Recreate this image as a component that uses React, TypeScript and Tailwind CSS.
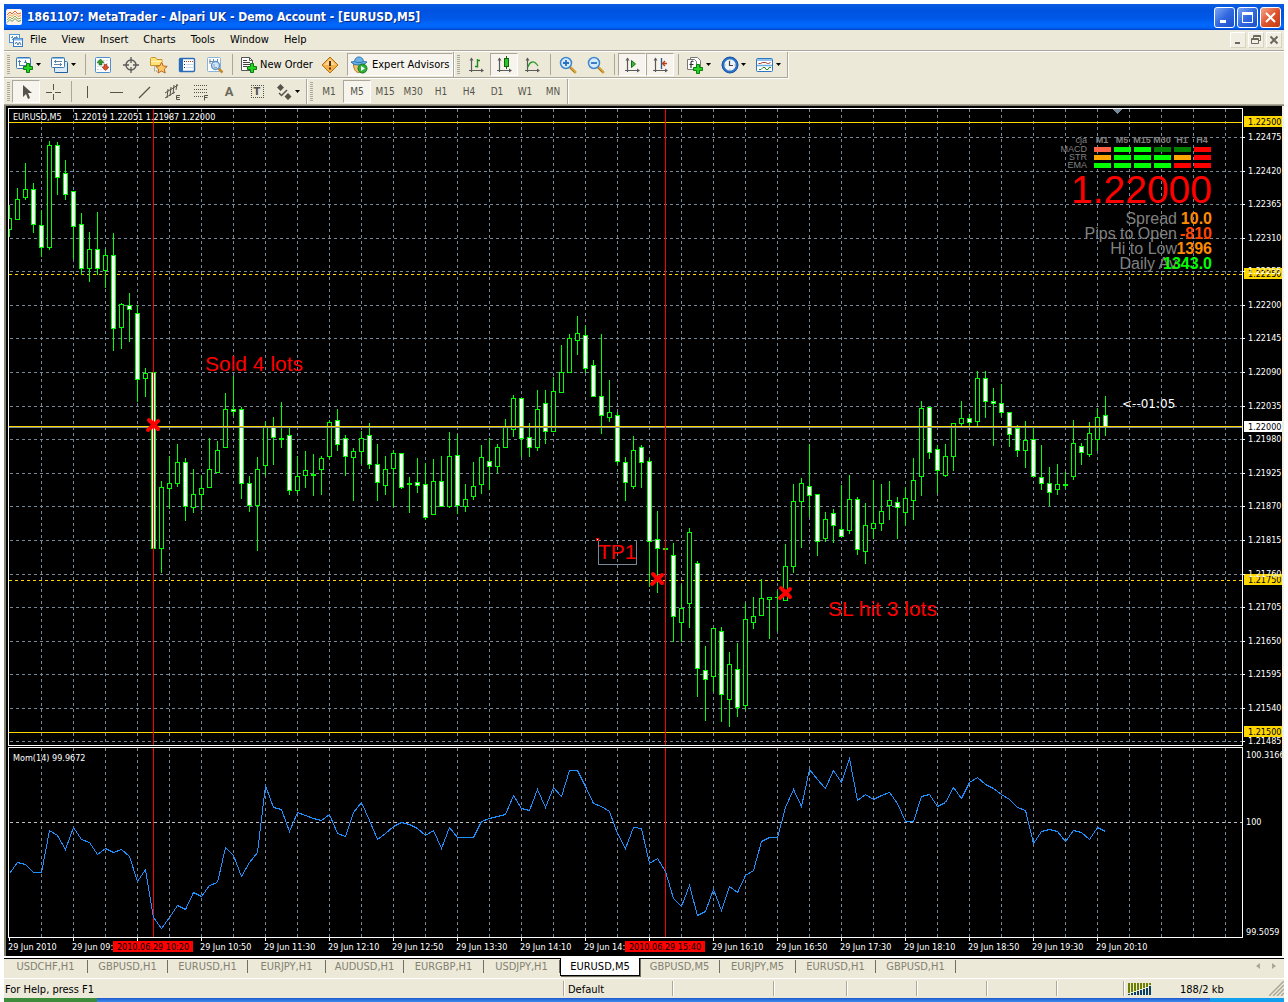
import type { ReactNode } from "react"

type Kind = "up" | "down"
type Candle = [high: number, top: number, bottom: number, low: number, kind: Kind]

const U: Kind = "up"
const D: Kind = "down"

// one bar every 8px, values are rows of the price pane
const candles: Candle[] = [
  [205, 218, 230, 237, U], [188, 199, 220, 220, U], [163, 189, 198, 200, U], [183, 189, 225, 233, D],
  [210, 225, 248, 257, D], [141, 145, 248, 250, U], [142, 145, 178, 195, D], [160, 173, 195, 200, D],
  [191, 191, 227, 259, D], [213, 224, 269, 275, D], [232, 249, 269, 282, U], [212, 249, 269, 275, D],
  [249, 255, 271, 288, U], [233, 255, 329, 351, D], [303, 304, 328, 349, U], [293, 305, 310, 342, D],
  [305, 313, 380, 402, D], [368, 373, 379, 397, U], [372, 372, 549, 549, D], [481, 487, 549, 573, U],
  [456, 483, 489, 509, U], [444, 462, 484, 487, U], [458, 462, 507, 521, D], [469, 494, 508, 513, U],
  [475, 488, 495, 510, U], [438, 469, 488, 488, U], [441, 450, 473, 473, U], [393, 409, 448, 448, U],
  [376, 409, 412, 416, D], [407, 409, 484, 499, D], [476, 483, 506, 512, D], [457, 469, 506, 551, U],
  [422, 427, 466, 476, U], [417, 427, 438, 465, D], [402, 438, 440, 448, U], [428, 435, 491, 495, D],
  [456, 476, 491, 494, U], [451, 470, 476, 488, U], [454, 474, 476, 496, U], [456, 458, 470, 495, U],
  [420, 422, 457, 459, U], [409, 420, 445, 451, D], [435, 438, 457, 476, D], [448, 451, 458, 501, U],
  [431, 438, 452, 464, U], [423, 435, 465, 469, D], [444, 464, 483, 501, D], [456, 469, 486, 495, U],
  [450, 453, 469, 507, U], [453, 453, 488, 489, D], [477, 483, 485, 513, U], [458, 482, 486, 493, D],
  [463, 484, 518, 520, D], [459, 481, 515, 515, U], [456, 481, 507, 507, D], [432, 456, 507, 508, U],
  [434, 455, 506, 514, D], [484, 499, 507, 512, U], [462, 486, 497, 500, U], [445, 457, 485, 494, U],
  [438, 461, 467, 490, D], [444, 447, 467, 473, U], [419, 426, 448, 448, U], [395, 398, 430, 437, U],
  [398, 398, 439, 457, D], [423, 437, 448, 457, D], [390, 409, 448, 451, U], [390, 403, 432, 444, D],
  [377, 391, 432, 432, U], [345, 372, 393, 393, U], [334, 338, 373, 373, U], [316, 333, 341, 355, U],
  [326, 335, 369, 373, D], [360, 365, 397, 397, D], [334, 396, 416, 434, D], [380, 412, 418, 422, U],
  [412, 415, 462, 465, D], [457, 462, 483, 501, D], [436, 450, 487, 489, U], [445, 447, 463, 488, D],
  [458, 461, 542, 587, D], [511, 539, 549, 593, D], [548, 548, 550, 550, U], [543, 555, 617, 642, D],
  [585, 608, 623, 642, U], [528, 532, 604, 628, U], [561, 563, 669, 697, D], [646, 670, 680, 721, D],
  [628, 628, 677, 692, U], [627, 631, 695, 722, D], [652, 664, 700, 727, U], [643, 669, 708, 717, D],
  [603, 619, 706, 710, U], [597, 616, 623, 629, U], [579, 598, 616, 616, U], [597, 597, 600, 639, U],
  [591, 597, 598, 631, U], [544, 566, 601, 601, U], [484, 501, 567, 573, U], [478, 483, 502, 548, U],
  [444, 486, 496, 517, D], [494, 494, 542, 556, D], [512, 519, 539, 542, U], [509, 513, 526, 543, D],
  [485, 529, 537, 537, D], [475, 499, 531, 534, U], [497, 499, 550, 555, D], [503, 525, 552, 564, U],
  [480, 523, 529, 539, U], [484, 511, 524, 531, U], [481, 500, 506, 520, U], [497, 502, 508, 539, D],
  [487, 498, 513, 526, U], [458, 480, 501, 520, U], [401, 408, 477, 496, U], [407, 407, 453, 459, D],
  [445, 449, 471, 494, D], [444, 456, 476, 477, U], [423, 423, 457, 471, U], [401, 418, 424, 427, U],
  [414, 418, 423, 427, D], [371, 378, 422, 427, U], [371, 378, 402, 418, D], [388, 401, 404, 446, D],
  [384, 403, 413, 417, D], [412, 412, 435, 447, D], [425, 428, 451, 457, D], [421, 440, 451, 468, U],
  [428, 439, 477, 477, D], [445, 477, 484, 490, D], [467, 483, 493, 506, D], [464, 484, 490, 495, U],
  [472, 484, 486, 489, U], [420, 443, 477, 480, U], [443, 446, 453, 465, D], [422, 433, 455, 457, U],
  [408, 417, 440, 451, U], [396, 415, 428, 436, D],
]

const momentum = [
  873, 862, 864, 872, 872, 830, 835, 849, 827, 839, 842, 854, 848, 852, 849, 856, 881, 869, 917, 928,
  917, 905, 909, 892, 896, 885, 882, 847, 855, 876, 862, 852, 785, 807, 809, 831, 812, 815, 818, 820,
  814, 833, 836, 812, 802, 820, 839, 833, 826, 822, 824, 828, 835, 830, 848, 827, 837, 837, 837, 821,
  818, 816, 814, 795, 808, 810, 789, 807, 787, 796, 770, 770, 786, 803, 806, 811, 833, 848, 827, 828,
  863, 858, 871, 898, 906, 885, 915, 911, 889, 910, 886, 892, 875, 870, 841, 837, 837, 807, 789, 806,
  769, 779, 788, 770, 782, 758, 800, 794, 799, 795, 792, 803, 821, 821, 796, 794, 806, 802, 787, 798,
  782, 777, 784, 788, 794, 799, 807, 810, 843, 831, 829, 831, 841, 830, 832, 839, 827, 831,
]

const prices: [string, number][] = [
  ["1.22475", 137], ["1.22420", 171], ["1.22365", 204], ["1.22310", 238], ["1.22255", 271],
  ["1.22200", 305], ["1.22145", 338], ["1.22090", 372], ["1.22035", 406], ["1.21980", 439],
  ["1.21925", 473], ["1.21870", 506], ["1.21815", 540], ["1.21760", 574], ["1.21705", 607],
  ["1.21650", 641], ["1.21595", 674], ["1.21540", 708], ["1.21485", 741],
]

const badges: [string, number, string][] = [
  ["1.22500", 122, "#ffd700"], ["1.22250", 274, "#ffd700"], ["1.22000", 427, "#ffffff"],
  ["1.21750", 580, "#ffd700"], ["1.21500", 732, "#ffd700"],
]

const dates: [string, number][] = [
  ["29 Jun 2010", 0], ["29 Jun 09:30", 64], ["", 128], ["29 Jun 10:50", 192], ["29 Jun 11:30", 256],
  ["29 Jun 12:10", 320], ["29 Jun 12:50", 384], ["29 Jun 13:30", 448], ["29 Jun 14:10", 512],
  ["29 Jun 14:50", 576], ["", 640], ["29 Jun 16:10", 704], ["29 Jun 16:50", 768], ["29 Jun 17:30", 832],
  ["29 Jun 18:10", 896], ["29 Jun 18:50", 960], ["29 Jun 19:30", 1024], ["29 Jun 20:10", 1088],
]

const columns = Array.from({ length: 38 }, (_, i) => 32 + i * 32)
const trades = [144, 656]
const marks = [[144, 425], [648, 579], [776, 593]]

const signals: [string, number, string[]][] = [
  ["MACD", 149, ["#ff6347", "#00ff00", "#00ff00", "#008000", "#008000", "#ff0000"]],
  ["STR", 157, ["#ffa500", "#00ff00", "#00ff00", "#00ff00", "#ffa500", "#ff0000"]],
  ["EMA", 165, ["#00ff00", "#00ff00", "#00ff00", "#00ff00", "#ff0000", "#ff0000"]],
]

const stats: [string, string, number, string][] = [
  ["Spread", "10.0", 224, "#ff8c00"],
  ["Pips to Open", "-810", 239, "#ff4500"],
  ["Hi to Low", "1396", 254, "#ff8c00"],
  ["Daily Av", "1343.0", 269, "#00ff00"],
]

const periods = ["M1", "M5", "M15", "M30", "H1", "H4", "D1", "W1", "MN"]

/* ---------- icons ---------- */

function Icon({ children, label, size = 18 }: { children: ReactNode; label?: string; size?: number }) {
  return (
    <svg width={size} height={size} viewBox={`0 0 ${size} ${size}`} className="shrink-0" aria-label={label} fill="none">
      {children}
    </svg>
  )
}

const Plus = ({ x, y }: { x: number; y: number }) => (
  <path
    transform={`translate(${x} ${y})`}
    d="M3.5.5h3v3h3v3h-3v3h-3v-3h-3v-3h3z"
    fill="#25d425"
    stroke="#0a7d0a"
  />
)

const NewChartIcon = () => (
  <Icon>
    <rect x="0.5" y="1.5" width="14" height="11" rx="1" fill="#fff" stroke="#3b78b4" />
    <path d="M1 2.500h13" stroke="#8fc0ea" />
    <path d="M3.500 4v6M2 5.500h3M3 9.500h9M9.500 4v3M8 6.500h3" stroke="#4f7ea8" />
    <Plus x={7} y={7} />
  </Icon>
)

const ProfilesIcon = () => (
  <Icon>
    <rect x="3.500" y="5.500" width="13" height="11" rx="1" fill="#dcebf8" stroke="#3b78b4" />
    <rect x="0.5" y="1.500" width="13" height="10" rx="1" fill="#fff" stroke="#3b78b4" />
    <path d="M1 2.500h12" stroke="#8fc0ea" />
    <path d="M3 5.500h8M3 8.500h8M4.500 4v3M9.500 7v3" stroke="#5f86a8" />
    <path d="M16.500 7v9.500h-12" stroke="#235f9c" />
  </Icon>
)

const MarketIcon = () => (
  <Icon>
    <rect x="1.5" y="1.5" width="15" height="15" rx="1" fill="#fff" stroke="#4c8fd0" />
    <path d="M3 4.500h12M3 7.500h12M3 10.500h12M3 13.500h12" stroke="#d3dde6" strokeDasharray="2 1" />
    <path d="M6.500 3l3.500 3.500H8V9H5V6.500H3z" fill="#2d9a2d" stroke="#176317" strokeWidth="0.6" />
    <path d="M11.500 14.500L8 11h2V8.500h3V11h2z" fill="#e0502a" stroke="#8f260d" strokeWidth="0.6" />
  </Icon>
)

const TargetIcon = () => (
  <Icon>
    <circle cx="9" cy="9" r="5" stroke="#5a5a5a" strokeWidth="1.4" />
    <path d="M9 1v6M9 11v6M1 9h6M11 9h6" stroke="#5a5a5a" strokeWidth="1.3" />
  </Icon>
)

const starPath = "M11.500 6.500l1.800 3.500 3.900.4-2.900 2.700.9 3.900-3.700-1.900-3.500 1.900.6-3.900-2.800-2.700 3.900-.5z"

const NavigatorIcon = () => (
  <Icon>
    <path d="M.5 9.500v-7l1-1h4l1.500 2h5v6z" fill="#ffe27a" stroke="#c8962c" />
    <path d="M1 5.500h11" stroke="#fff3b8" />
    <path d="M4.500 10.500v4.500h3" stroke="#777" strokeDasharray="1 1" />
    <path d={starPath} fill="#ffc766" stroke="#b9661c" />
  </Icon>
)

const TerminalIcon = () => (
  <Icon>
    <rect x="1.500" y="2.500" width="15" height="13" rx="1" fill="#fff" stroke="#2a6cb8" strokeWidth="1.400" />
    <path d="M3.500 3v12" stroke="#2a6cb8" strokeWidth="3" />
    <path d="M8 5.500h7" stroke="#c2452a" strokeDasharray="1 1" />
    <path d="M8 8.500h7M8 11.500h7" stroke="#c9d8e6" />
    <path d="M6 5h1v1h-1zM6 8h1v1h-1zM6 11h1v1h-1z" fill="#223" />
  </Icon>
)

const TesterIcon = () => (
  <Icon>
    <rect x="1.500" y="1.500" width="13" height="14" rx="1" fill="#fff" stroke="#8ab4d8" />
    <path d="M4 3v5M3 5.500h4M7.500 3v4M11.500 3v3" stroke="#6d8aa4" />
    <path d="M12.500 12.500l4 4" stroke="#c58a2c" strokeWidth="2.500" />
    <circle cx="9.500" cy="9.500" r="4" fill="#cfe6fa" stroke="#5f93c4" strokeWidth="1.400" />
    <path d="M8 8v3.500h3" stroke="#86a6c0" />
  </Icon>
)

const OrderIcon = () => (
  <Icon>
    <path d="M1.500 1.500h8l3 3v10h-11z" fill="#fff" stroke="#555" />
    <path d="M9.500 1.500v3h3" stroke="#555" />
    <path d="M3 4.500h4M3 6.500h7M3 8.500h7M3 10.500h4" stroke="#444" />
    <Plus x={7} y={7} />
  </Icon>
)

const WarningIcon = () => (
  <Icon>
    <path d="M9 1l8 8-8 8-8-8z" fill="#f6b24a" stroke="#b46e16" strokeLinejoin="round" />
    <path d="M9 3l6 6H3z" fill="#fbd696" />
    <path d="M8 5h2v5H8zM8 11.500h2v2H8z" fill="#5b3208" />
  </Icon>
)

const ExpertIcon = () => (
  <Icon>
    <path d="M3.500 8c0 6 3 8.500 5 8.500S14 14 14 8z" fill="#f2c36a" stroke="#a87420" />
    <path d="M1 6C3 8.500 6 9 9 9s6-.5 8-3l-3.500-.5C13 2 11 1 9 1S5 2 4.500 5.500z" fill="#6db2e6" stroke="#2c74ae" />
    <path d="M4.500 5.500c3 1.500 6 1.500 9 0" stroke="#2c74ae" />
    <circle cx="12.500" cy="12.500" r="4.500" fill="#2eae3a" stroke="#137a20" />
    <path d="M11 10l4 2.500-4 2.500z" fill="#fff" />
  </Icon>
)

const Axes = () => (
  <>
    <path d="M4.500 2v14M2 14.500h14" stroke="#5a5a5a" strokeWidth="1.200" />
    <path d="M2.500 4.500l2-3 2 3zM14 12.500l3 2-3 2z" fill="#5a5a5a" />
  </>
)

const BarsIcon = () => (
  <Icon>
    <Axes />
    <path d="M10.500 3v8.500M8 10.500h2.500M10.500 4.500H13" stroke="#1e8a1e" strokeWidth="1.400" />
  </Icon>
)

const CandlesIcon = () => (
  <Icon>
    <Axes />
    <path d="M11.500 0v13" stroke="#116611" />
    <rect x="9.500" y="2.500" width="4" height="8" fill="#2fc22f" stroke="#116611" />
  </Icon>
)

const LineIcon = () => (
  <Icon>
    <Axes />
    <path d="M5 11c2-6 6-7 10-1" stroke="#2d9a2d" strokeWidth="1.300" />
  </Icon>
)

const ZoomIcon = ({ plus }: { plus?: boolean }) => (
  <Icon>
    <path d="M11 11l5 5" stroke="#d8a43c" strokeWidth="3" strokeLinecap="round" />
    <path d="M11 12l4.500 4.500" stroke="#8f6a1c" strokeWidth="0.8" />
    <circle cx="7" cy="7" r="5.500" fill="#d6ebff" stroke="#3f86cc" strokeWidth="1.500" />
    <path d={plus ? "M4 7h6M7 4v6" : "M4 7h6"} stroke="#2a72bd" strokeWidth="1.800" />
  </Icon>
)

const ScrollIcon = () => (
  <Icon>
    <Axes />
    <path d="M8.500 4.500l4 3.500-4 3.500z" fill="#38b838" stroke="#146c14" />
  </Icon>
)

const ShiftIcon = () => (
  <Icon>
    <Axes />
    <path d="M10.500 2v11" stroke="#2e5f8f" strokeWidth="1.400" />
    <path d="M16 7.500h-4M14 5l-2.500 2.500L14 10" stroke="#b8401a" strokeWidth="1.400" />
  </Icon>
)

const IndicatorIcon = () => (
  <Icon>
    <path d="M4.500 1.500h7l3 3v9h-10z" fill="#fff" stroke="#777" />
    <path d="M1.500 3.500h7l2 2v8h-9z" fill="#fff" stroke="#777" />
    <path d="M7.500 5.500c-2-1-2.500 0-2.500 2v4.500M3.500 8.500h4" stroke="#333" strokeWidth="1.200" />
    <Plus x={7} y={8} />
  </Icon>
)

const ClockIcon = () => (
  <Icon>
    <circle cx="9" cy="9" r="7" fill="#eef4fa" stroke="#2a72c8" strokeWidth="2.600" />
    <circle cx="9" cy="9" r="8" stroke="#174f96" strokeWidth="0.8" />
    <path d="M8.500 5v4.500h3.500" stroke="#444" strokeWidth="1.200" />
    <path d="M9 3.500v1M9 13.500v1M3.500 9h1M13.500 9h1" stroke="#888" />
  </Icon>
)

const TemplateIcon = () => (
  <Icon>
    <rect x="0.5" y="2.500" width="16" height="13" rx="1" fill="#fff" stroke="#2f77bd" />
    <path d="M1 4h15M1 9.500h15" stroke="#6fade6" strokeWidth="1.500" />
    <path d="M2.500 7.500h2l2-1h3l2 1h1l2-1" stroke="#a33a20" />
    <path d="M3 13.500h2l2-2h2l1 2h2l1-2h2" stroke="#2b8a2b" />
  </Icon>
)

const gray = "#55534a"

const drawingTools: [string, ReactNode][] = [
  ["Vertical line", <path d="M7.500 3v12" stroke={gray} />],
  ["Horizontal line", <path d="M2 9.500h13" stroke={gray} />],
  ["Trendline", <path d="M3 15L14 4" stroke={gray} strokeWidth="1.300" />],
  [
    "Equidistant channel",
    <>
      <path d="M1 10L14 2M1 15l10-6M4 6l-1 9M7 4L6 13M10 2L9 11M13 1l-1 6" stroke={gray} />
      <path d="M16 12.500h-3.500v4H16M12.500 14.500h3" stroke={gray} />
    </>,
  ],
  [
    "Fibonacci retracement",
    <>
      <path d="M2 2.500h14M2 6.500h14M2 9.500h14M2 13.500h9" stroke={gray} strokeDasharray="1 1" />
      <path d="M16 12.500h-3.500v5M12.500 14.500h3" stroke={gray} />
    </>,
  ],
]

const Caret = () => (
  <svg width="5" height="3" viewBox="0 0 5 3" className="shrink-0">
    <path d="M0 0h5L2.500 3z" fill="#000" />
  </svg>
)

/* ---------- toolbar parts ---------- */

function Tool({ label, pressed, children }: { label: string; pressed?: boolean; children: ReactNode }) {
  return (
    <button
      type="button"
      aria-label={label}
      className={
        pressed
          ? "flex h-[23px] w-7 items-center justify-center border border-[#aca899] border-r-white border-b-white bg-[#f6f4ec]"
          : "flex h-[23px] w-7 items-center justify-center"
      }
    >
      {children}
    </button>
  )
}

function DropTool({ label, children }: { label: string; children: ReactNode }) {
  return (
    <button type="button" aria-label={label} className="flex h-[23px] w-[35px] items-center gap-0.5 pl-1">
      {children}
      <Caret />
    </button>
  )
}

const Separator = ({ wide }: { wide?: boolean }) => (
  <span className={wide ? "flex w-2 justify-center" : "flex w-[7px] justify-center"}>
    <span className="h-[21px] w-px bg-[#aca899]" />
  </span>
)

const Grip = () => (
  <span className="flex w-2 justify-center">
    <span className="h-[19px] w-[3px] bg-[repeating-linear-gradient(to_bottom,#aca899_0_1px,#ece9d8_1px_2px)]" />
  </span>
)

function Toolbar({ children }: { children: ReactNode }) {
  return (
    <div className="flex h-[26px] items-center border-r border-b border-[#aca899] shadow-[1px_1px_0_#fff]">
      {children}
    </div>
  )
}

/* ---------- chart ---------- */

function Grid({ height }: { height: string }) {
  return (
    <g stroke="#778899" strokeDasharray="3 3" transform="translate(0.5 0)">
      {columns.map((x) => (
        <line key={x} x1={x} x2={x} y1="0" y2={height} />
      ))}
    </g>
  )
}

function PricePane() {
  return (
    <svg width="100%" height="636" className="block" shapeRendering="crispEdges" role="img" aria-label="EURUSD,M5">
      <Grid height="100%" />
      <g transform="translate(0 -109)">
        <g transform="translate(0 0.5)">
          {prices.map(([p, y]) => (
            <line key={p} x1="1" x2="100%" y1={y} y2={y} stroke="#778899" strokeDasharray="3 3" />
          ))}
          <line x1="0" x2="100%" y1="122" y2="122" stroke="#ffd700" />
          <line x1="0" x2="100%" y1="732" y2="732" stroke="#ffd700" />
          <line x1="0" x2="100%" y1="274" y2="274" stroke="#ffd700" strokeDasharray="3 3" />
          <line x1="0" x2="100%" y1="580" y2="580" stroke="#ffd700" strokeDasharray="3 3" />
        </g>
        {candles.map(([high, top, bottom, low, kind], i) => (
          <g key={i}>
            <rect x={i * 8} y={high} width="1" height={low - high} fill="#00ff00" />
            <rect x={i * 8 - 2} y={top} width="5" height={bottom - top} fill="#00ff00" />
            {bottom - top > 2 && (
              <rect
                x={i * 8 - 1}
                y={top + 1}
                width="3"
                height={bottom - top - 2}
                fill={kind === "up" ? "#000000" : "#ffffff"}
              />
            )}
          </g>
        ))}
        <rect x="0" y="427" width="100%" height="1" fill="#778899" />
        <rect x="0" y="426" width="100%" height="1" fill="#ffd700" />
        {trades.map((x) => (
          <rect key={x} x={x} y="109" width="1" height="636" fill="#ff0000" />
        ))}
        <path d="M1103 109h11l-5.500 5z" fill="#778899" />

        <g shapeRendering="auto" stroke="#ff0000" strokeWidth="4" strokeLinecap="round">
          {marks.map(([x, y]) => (
            <path key={x} d={`M${x - 4} ${y - 5}l9 9M${x + 5} ${y - 4}l-10 9`} />
          ))}
        </g>

        <g fill="#ff0000" fontSize="21">
          <text x="196" y="371">Sold 4 lots</text>
          <text x="589" y="559">TP1</text>
          <text x="819" y="616">SL hit 3 lots</text>
        </g>
        <path d="M589.500 541v23.500h38v-24" fill="none" stroke="#778899" />
        <rect x="587" y="538" width="3" height="3" fill="#ff0000" />
        <rect x="588" y="539" width="1" height="1" fill="#ffffff" />
        <text x="1113" y="408" fontSize="12" fill="#ffffff" fontFamily="DejaVu Sans, sans-serif">
          {"<--01:05"}
        </text>

        <g fontSize="9" fill="#808080">
          <text x="1078" y="143" textAnchor="end">cja</text>
          {["M1", "M5", "M15", "M30", "H1", "H4"].map((p, i) => (
            <text key={p} x={1093 + i * 20} y="143" textAnchor="middle" fontWeight="bold">{p}</text>
          ))}
          {signals.map(([name, y, colors]) => (
            <g key={name}>
              <text x="1078" y={y + 3} textAnchor="end">{name}</text>
              {colors.map((c, i) => (
                <rect key={i} x={1085 + i * 20} y={y - 2} width="17" height="5" fill={c} />
              ))}
            </g>
          ))}
        </g>
        <text x="1203" y="203" fontSize="39" fill="#ff0000" textAnchor="end">1.22000</text>
        {stats.map(([name, value, y, color]) => (
          <g key={name} fontSize="16">
            <text x="1168" y={y} fill="#808080" textAnchor="end">{name}</text>
            <text x="1203" y={y} fill={color} textAnchor="end" fontWeight="bold">{value}</text>
          </g>
        ))}
      </g>
    </svg>
  )
}

function MomentumPane() {
  return (
    <svg width="100%" height="100%" className="absolute inset-0" role="img" aria-label="Momentum">
      <g shapeRendering="crispEdges">
        <Grid height="100%" />
        <line x1="1" x2="100%" y1="74" y2="74" transform="translate(0 0.5)" stroke="#c0c0c0" strokeDasharray="3 3" />
        {trades.map((x) => (
          <rect key={x} x={x} y="0" width="1" height="100%" fill="#ff0000" />
        ))}
        <polyline
          points={momentum.map((y, i) => `${i * 8},${y - 748}`).join(" ")}
          transform="translate(0.5 0.5)"
          fill="none"
          stroke="#1e90ff"
        />
      </g>
    </svg>
  )
}

function Chart() {
  return (
    <main className="flex flex-1 flex-col border-t border-l-2 border-[#85836f] bg-black pt-[2px] pr-0.5 pl-0.5 text-white shadow-[0_-1px_0_#aca899,inset_-2px_0_0_#f1efe2]">
      <div className="flex">
        <div className="relative min-w-0 flex-1 overflow-hidden border border-white font-['Liberation_Sans',Arial,sans-serif]">
          <PricePane />
          <p className="absolute top-0.5 left-1 flex gap-3 font-['DejaVu_Sans_Condensed','DejaVu_Sans',sans-serif] text-[9px] leading-3">
            <span>EURUSD,M5</span>
            <span>1.22019 1.22051 1.21987 1.22000</span>
          </p>
        </div>
        <svg width="39" height="638" className="shrink-0" fontSize="9" fill="#ffffff">
          <g transform="translate(0 -108)">
            {badges.map(([p, y, color]) => (
              <g key={p}>
                <rect x="1" y={y - 6} width="38" height="11" fill={color} />
                <text x="5" y={y + 3} fill="#000000">{p}</text>
              </g>
            ))}
            {prices.map(([p, y]) => (
              <g key={p}>
                <rect x="0" y={y} width="2" height="1" />
                <text x="5" y={y + 3}>{p}</text>
              </g>
            ))}
          </g>
        </svg>
      </div>

      <div className="mt-px flex min-h-[190px] flex-1">
        <div className="relative min-w-0 flex-1 overflow-hidden border border-white">
          <MomentumPane />
          <p className="absolute top-1 left-1 text-[9px] leading-3">Mom(14) 99.9672</p>
        </div>
        <div className="flex w-[39px] shrink-0 flex-col overflow-hidden pl-[3px] text-[9px] leading-3">
          <span className="mt-0.5">100.3166</span>
          <span className="mt-[55px]">100</span>
          <span className="mt-auto">99.5059</span>
        </div>
      </div>

      <svg width="100%" height="18" className="block" fontSize="9" fill="#ffffff">
        {dates.map(([text, x]) => (
          <g key={x}>
            <rect x={x + 1} y="0" width="1" height="3" />
            <text x={x} y="12">{text}</text>
          </g>
        ))}
        {[["2010.06.29 10:20", 105], ["2010.06.29 15:40", 617]].map(([text, x]) => (
          <g key={text}>
            <rect x={x} y="3" width="80" height="11" fill="#ff0000" />
            <text x={Number(x) + 40} y="12" fill="#000000" textAnchor="middle">{text}</text>
          </g>
        ))}
      </svg>
    </main>
  )
}

/* ---------- window ---------- */

const tabs: [string, string][] = [
  ["USDCHF,H1", "w-[84px]"], ["GBPUSD,H1", "w-20"], ["EURUSD,H1", "w-20"], ["EURJPY,H1", "w-[78px]"],
  ["AUDUSD,H1", "w-[78px]"], ["EURGBP,H1", "w-20"], ["USDJPY,H1", "w-[76px]"], ["EURUSD,M5", "w-20"],
  ["GBPUSD,M5", "w-20"], ["EURJPY,M5", "w-[76px]"], ["EURUSD,H1", "w-20"], ["GBPUSD,H1", "w-20"],
]

const statusCells = ["w-[101px]", "w-[73px]", "w-[70px]", "w-[70px]", "w-[70px]", "w-[67px]"]

function WindowButton({ label, close, children }: { label: string; close?: boolean; children: ReactNode }) {
  return (
    <button
      type="button"
      aria-label={label}
      className={
        close
          ? "flex size-[21px] items-center justify-center rounded-[3px] border border-white bg-linear-to-br from-[#f0a58a] via-[#e0532c] to-[#c03a10]"
          : "flex size-[21px] items-center justify-center rounded-[3px] border border-white bg-linear-to-br from-[#7ba4f4] via-[#3168e0] to-[#1c4fc8]"
      }
    >
      <svg width="15" height="15" viewBox="0 0 15 15" fill="none" stroke="#fff">
        {children}
      </svg>
    </button>
  )
}

function ChildButton({ label, children }: { label: string; children: ReactNode }) {
  return (
    <button
      type="button"
      aria-label={label}
      className="flex size-4 items-center justify-center border border-white border-r-[#d8d4c0] border-b-[#d8d4c0] bg-[#f1efe4]"
    >
      <svg width="12" height="12" viewBox="0 0 12 12" fill="none" stroke="#6b685c">
        {children}
      </svg>
    </button>
  )
}

export default function App() {
  return (
    <div className="flex min-h-screen flex-col bg-white px-1 pt-1 font-['DejaVu_Sans_Condensed','DejaVu_Sans',sans-serif] text-[11px] leading-[14px] text-black">
      <header className="flex h-[26px] items-center bg-[linear-gradient(to_bottom,#0a5ce0_0%,#0053e0_25%,#0058e8_55%,#0068ff_80%,#0062f4_92%,#0040c0_100%)] pr-[3px] pl-0.5">
        <Icon label="MetaTrader" size={16}>
          <rect width="16" height="16" rx="2" fill="#fdf3ea" />
          <path d="M1 6l3-3 2 2 3-3 3 3 3-1" stroke="#e0662c" />
          <path d="M1 8.500l3-3 2 2 3-3 3 3 3-1" stroke="#e79a3a" />
          <path d="M1 11l3-3 2 2 3-3 3 3 3-1" stroke="#8fae56" />
          <path d="M1 13.500l3-3 2 2 3-3 3 3 3-1" stroke="#5b9a5b" />
        </Icon>
        <h1 className="ml-[5px] flex-1 truncate text-[12px] leading-5 font-bold text-white [text-shadow:1px_1px_0_#0a2a80]">
          1861107: MetaTrader - Alpari UK - Demo Account - [EURUSD,M5]
        </h1>
        <div className="flex gap-0.5">
          <WindowButton label="Minimize">
            <path d="M3 11.500h6" strokeWidth="3" />
          </WindowButton>
          <WindowButton label="Maximize">
            <path d="M2.500 3h10v9.500h-10z" />
            <path d="M2 3.500h11" strokeWidth="3" />
          </WindowButton>
          <WindowButton label="Close" close>
            <path d="M3 3l9 9M12 3l-9 9" strokeWidth="2" />
          </WindowButton>
        </div>
      </header>

      <div className="flex flex-1 flex-col bg-[#ece9d8]">
        <nav className="flex h-[21px] items-center border-b border-[#aca899] pr-0.5 pl-[5px] shadow-[0_1px_0_#fff]">
          <Icon size={15}>
            <rect x="0.5" y="1.500" width="10" height="8" fill="#fff" stroke="#4f93d8" />
            <path d="M2 4.500h7M3.500 3v4M7.500 3v4" stroke="#6a8fb0" strokeDasharray="2 1" />
            <rect x="4.500" y="5.500" width="9" height="8" fill="#fff" stroke="#3579c4" />
            <path d="M5 6.500h8" stroke="#7db4ea" strokeWidth="2" />
            <path d="M6 11l1.500-2L9 12l1.500-3L12 12" stroke="#4a7aa5" />
          </Icon>
          <div className="ml-1.5 flex flex-1 gap-[15px]">
            {["File", "View", "Insert", "Charts", "Tools", "Window", "Help"].map((item) => (
              <button key={item} type="button">{item}</button>
            ))}
          </div>
          <div className="flex gap-0.5">
            <ChildButton label="Minimize chart">
              <path d="M3 9h5" strokeWidth="2" />
            </ChildButton>
            <ChildButton label="Restore chart">
              <path d="M3.500 4V1.500h7v5H8M1.500 4.500h7v5h-7zM1.500 5.500h7M3.500 2.500h7" />
            </ChildButton>
            <ChildButton label="Close chart">
              <path d="M2.500 2.500l7 7M9.500 2.500l-7 7" strokeWidth="2" />
            </ChildButton>
          </div>
        </nav>

        <div className="mt-px flex">
          <Toolbar>
            <Grip />
            <DropTool label="New chart"><NewChartIcon /></DropTool>
            <DropTool label="Profiles"><ProfilesIcon /></DropTool>
            <Separator />
            <Tool label="Market watch"><MarketIcon /></Tool>
            <Tool label="Data window"><TargetIcon /></Tool>
            <Tool label="Navigator"><NavigatorIcon /></Tool>
            <Tool label="Terminal"><TerminalIcon /></Tool>
            <Tool label="Strategy tester"><TesterIcon /></Tool>
            <Separator />
            <button type="button" className="flex h-[23px] w-20 items-center gap-0.5 pl-1 whitespace-nowrap">
              <OrderIcon />
              New Order
            </button>
            <Tool label="Warnings"><WarningIcon /></Tool>
            <button
              type="button"
              className="ml-[3px] flex h-[23px] w-[106px] items-center gap-1 border border-[#aca899] border-r-white border-b-white bg-[#f6f4ec] pl-0.5 whitespace-nowrap"
            >
              <ExpertIcon />
              Expert Advisors
            </button>
          </Toolbar>
          <Toolbar>
            <Grip />
            <Tool label="Bar chart"><BarsIcon /></Tool>
            <Tool label="Candlesticks" pressed><CandlesIcon /></Tool>
            <Tool label="Line chart"><LineIcon /></Tool>
            <Separator wide />
            <Tool label="Zoom in"><ZoomIcon plus /></Tool>
            <Tool label="Zoom out"><ZoomIcon /></Tool>
            <Separator wide />
            <Tool label="Auto scroll" pressed><ScrollIcon /></Tool>
            <Tool label="Chart shift" pressed><ShiftIcon /></Tool>
            <Separator wide />
            <DropTool label="Indicators"><IndicatorIcon /></DropTool>
            <DropTool label="Periods"><ClockIcon /></DropTool>
            <DropTool label="Templates"><TemplateIcon /></DropTool>
          </Toolbar>
        </div>

        <div className="mt-px flex">
          <Toolbar>
            <Grip />
            <Tool label="Cursor" pressed>
              <Icon>
                <path d="M6 2v12l3-3 2 5 2-1-2-5h4z" fill={gray} />
              </Icon>
            </Tool>
            <Tool label="Crosshair">
              <Icon>
                <path d="M8.500 1v6M8.500 11v6M1 9.500h6M10 9.500h6" stroke={gray} />
              </Icon>
            </Tool>
            <Separator />
            {drawingTools.map(([label, drawing]) => (
              <Tool key={label} label={label}>
                <Icon>{drawing}</Icon>
              </Tool>
            ))}
            <Tool label="Text">
              <span className="font-[Roboto,sans-serif] text-[13px] font-bold text-[#6b685c]">A</span>
            </Tool>
            <Tool label="Text label">
              <span className="flex size-[13px] items-center justify-center border border-dotted border-[#55534a] text-[11px] font-bold text-[#55534a]">
                T
              </span>
            </Tool>
            <DropTool label="Arrows">
              <Icon>
                <path d="M5.500 1L9 4.500 5.500 8 2 4.500zM13 10l3.500 3.500L13 17l-3.500-3.500z" fill={gray} />
                <path d="M4 10l2.500 2.500L12 7" stroke={gray} strokeWidth="1.500" />
              </Icon>
            </DropTool>
          </Toolbar>
          <Toolbar>
            <Grip />
            {periods.map((p) => (
              <button
                key={p}
                type="button"
                className={
                  p === "M5"
                    ? "h-[23px] w-7 border border-[#aca899] border-r-white border-b-white bg-[#f6f4ec] text-[10px] text-[#55534a]"
                    : "h-[23px] w-7 text-[10px] text-[#55534a]"
                }
              >
                {p}
              </button>
            ))}
          </Toolbar>
        </div>

        <Chart />

        <div className="flex h-[22px] items-start border-t-2 border-white shadow-[inset_0_1px_0_#000]">
          {tabs.map(([name, width], i) => (
            <div key={i} className={`${width} flex shrink-0 items-center`}>
              {name === "EURUSD,M5" ? (
                <button type="button" className="h-[18px] w-full border border-t-0 border-black bg-white shadow-[1px_1px_0_#716f64]">
                  {name}
                </button>
              ) : (
                <button type="button" className="mt-0.5 h-[13px] w-full border-r border-[#716f64] leading-3 text-[#848172]">
                  {name}
                </button>
              )}
            </div>
          ))}
          <div className="mt-[5px] mr-2 ml-auto flex gap-3">
            <button type="button" aria-label="Scroll left">
              <svg width="4" height="6" viewBox="0 0 4 6"><path d="M4 0v6L0 3z" fill="#aca899" /></svg>
            </button>
            <button type="button" aria-label="Scroll right">
              <svg width="4" height="6" viewBox="0 0 4 6"><path d="M0 0v6l4-3z" fill="#aca899" /></svg>
            </button>
          </div>
        </div>

        <footer className="flex h-5 items-stretch border-t border-white">
          <span className="flex-1 pt-1 pl-px">For Help, press F1</span>
          <span className="my-0.5 w-[109px] border-l border-[#aca899] pt-0.5 pl-1 shadow-[inset_1px_0_0_#fff]">Default</span>
          {statusCells.map((width, i) => (
            <span key={i} className={`${width} my-0.5 border-l border-[#aca899] shadow-[inset_1px_0_0_#fff]`} />
          ))}
          <span className="my-0.5 flex w-[161px] border-l border-[#aca899] pl-1 shadow-[inset_1px_0_0_#fff]">
            <svg width="24" height="13" viewBox="0 0 24 13" className="mt-0.5" shapeRendering="crispEdges">
              {[11, 10, 9, 8, 7, 6, 5, 3].map((h, i) => (
                <g key={i}>
                  <rect x={i * 3} y="0" width="2" height={h - 1} fill="#6b7f00" />
                  <rect x={i * 3} y={h} width="2" height={12 - h} fill="#0b4060" />
                </g>
              ))}
            </svg>
            <span className="ml-7 pt-0.5 whitespace-nowrap">188/2 kb</span>
            <svg width="15" height="15" viewBox="0 0 15 15" className="ml-auto self-end">
              <path d="M0 15L15 0M4 15L15 4M8 15l7-7M12 15l3-3" stroke="#aca899" strokeWidth="1.500" />
            </svg>
          </span>
        </footer>
      </div>

      <div className="flex h-1">
        <span className="w-[93px] bg-[#3c8c3c]" />
        <span className="flex-1 bg-linear-to-b from-[#1f58cc] to-[#3f8cf0]" />
        <span className="w-[74px] bg-[#12a0ee]" />
      </div>
    </div>
  )
}
